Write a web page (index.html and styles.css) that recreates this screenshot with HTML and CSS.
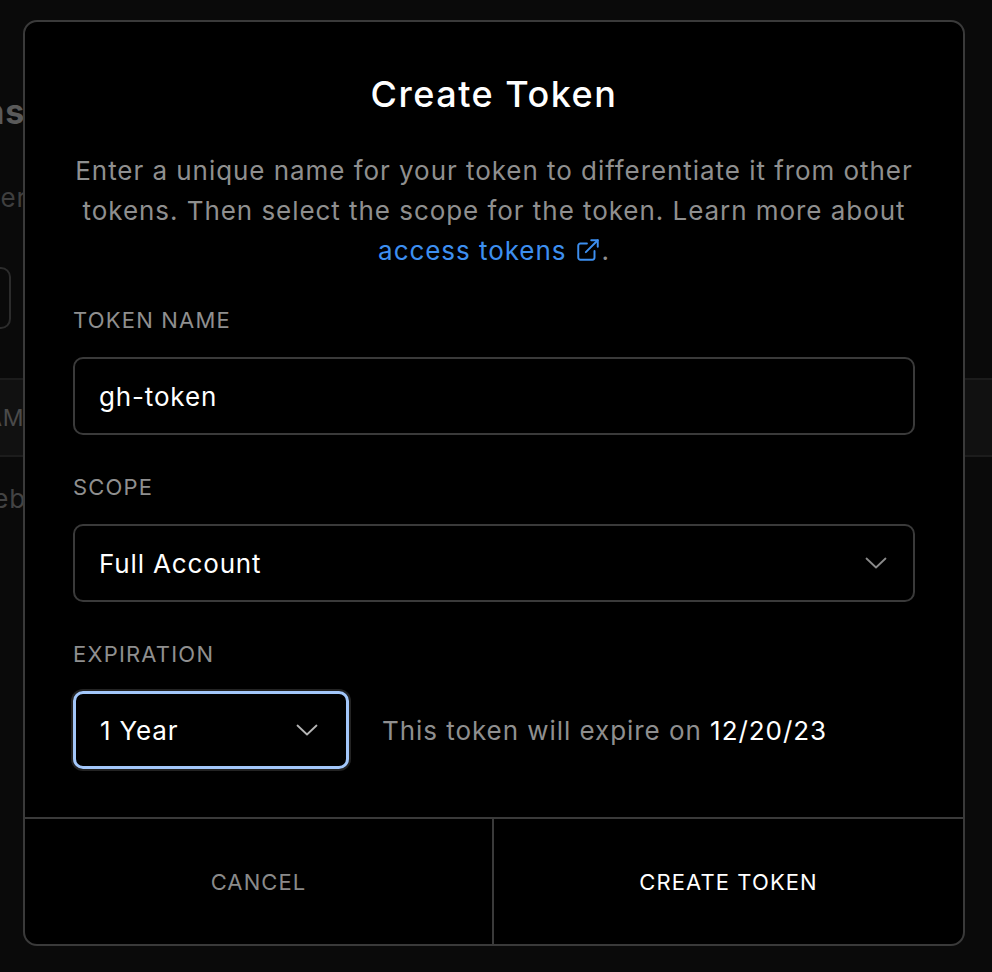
FILE: index.html
```html
<!DOCTYPE html>
<html lang="en">
<head>
<meta charset="utf-8">
<title>Create Token</title>
<link rel="stylesheet" href="styles.css">
</head>
<body>
<div class="page">
  <div class="bg-row bg-heading"><div class="cut">Access Tokens</div></div>
  <div class="bg-row bg-sub"><div class="cut">Create tokens to use with the CLI or API from other</div></div>
  <div class="bg-row bg-input-row"><div class="bg-input"></div></div>
  <div class="bg-band"><div class="cut band-cut">NAME</div></div>
  <div class="bg-row bg-cell"><div class="cut cell-cut">Deb</div></div>
</div>

<div class="modal" role="dialog" aria-labelledby="modal-title">
  <div class="modal-body">
    <h2 class="title" id="modal-title">Create Token</h2>
    <p class="desc">Enter a unique name for your token to differentiate it from other tokens. Then select the scope for the token. Learn more about <a class="link" href="#">access tokens<svg class="ext" viewBox="0 0 24 24" width="26" height="26" fill="none" stroke="currentColor" stroke-width="1.8" stroke-linecap="round" stroke-linejoin="round"><path d="M18 13v6a2 2 0 0 1-2 2H5a2 2 0 0 1-2-2V8a2 2 0 0 1 2-2h6"/><path d="M15 3h6v6"/><path d="M10 14L21 3"/></svg></a>.</p>

    <div class="field field-first">
      <div class="label">TOKEN NAME</div>
      <div class="input">gh-token</div>
    </div>

    <div class="field">
      <div class="label">SCOPE</div>
      <div class="input select">
        <span>Full Account</span>
        <svg class="chev" viewBox="0 0 22 12" width="22" height="12" fill="none" stroke="currentColor" stroke-width="1.8" stroke-linecap="round" stroke-linejoin="round"><polyline points="1.5 1.5 11 10.5 20.5 1.5"/></svg>
      </div>
    </div>

    <div class="field">
      <div class="label">EXPIRATION</div>
      <div class="exp-row">
        <div class="input select small focus">
          <span>1 Year</span>
          <svg class="chev" viewBox="0 0 22 12" width="22" height="12" fill="none" stroke="currentColor" stroke-width="1.8" stroke-linecap="round" stroke-linejoin="round"><polyline points="1.5 1.5 11 10.5 20.5 1.5"/></svg>
        </div>
        <div class="exp-note">This token will expire on <span class="date">12/20/23</span></div>
      </div>
    </div>
  </div>

  <div class="footer">
    <button class="btn btn-cancel" type="button">CANCEL</button>
    <button class="btn btn-create" type="button">CREATE TOKEN</button>
  </div>
</div>
</body>
</html>
```

FILE: styles.css
```css
* { box-sizing: border-box; }

html, body {
  margin: 0;
  padding: 0;
  background: #0a0a0a;
  font-family: Inter, "Noto Sans", "Liberation Sans", sans-serif;
  overflow: hidden;
}

.page {
  width: 992px;
  height: 972px;
  display: flex;
  flex-direction: column;
}

/* background page (dimmed, mostly hidden by the dialog) */
.bg-row {
  display: flex;
}
.cut {
  width: 1200px;
  margin-left: -1175px;
  text-align: right;
  white-space: nowrap;
  letter-spacing: 0.8px;
}
.bg-heading {
  margin-top: 92px;
  font-size: 34px;
  font-weight: 700;
  line-height: 40px;
  color: #5a5a5a;
}
.bg-sub {
  margin-top: 46px;
  font-size: 26px;
  line-height: 40px;
  color: #3f3f3f;
}
.bg-sub .cut { margin-left: -1173px; }
.bg-input-row {
  margin-top: 49px;
}
.bg-input {
  width: 200px;
  height: 62px;
  margin-left: -189px;
  border: 2px solid #2c2c2c;
  border-radius: 10px;
}
.bg-band {
  margin-top: 49px;
  height: 79px;
  background: #111111;
  border-top: 2px solid #1c1c1c;
  border-bottom: 2px solid #1c1c1c;
  display: flex;
  align-items: center;
  font-size: 23px;
  color: #4a4a4a;
}
.band-cut { margin-left: -1161px; }
.bg-cell {
  margin-top: 22px;
  font-size: 26px;
  line-height: 40px;
  color: #434343;
}
.cell-cut { margin-left: -1174px; }

/* modal */
.modal {
  position: absolute;
  left: 23px;
  top: 20px;
  width: 942px;
  height: 926px;
  background: #000;
  border: 2px solid #3a3a3a;
  border-radius: 14px;
  display: flex;
  flex-direction: column;
  overflow: hidden;
}
.modal-body {
  padding: 50px 48px 0;
  flex: 1;
}
.title {
  margin: 0;
  text-align: center;
  font-size: 36px;
  line-height: 44px;
  font-weight: 500;
  letter-spacing: 1.5px;
  color: #ffffff;
}
.desc {
  margin: 35px 0 0;
  text-align: center;
  font-size: 26px;
  line-height: 40px;
  letter-spacing: 0.95px;
  color: #8f8f8f;
}
.link {
  color: #3d8ff0;
  text-decoration: none;
}
.ext {
  display: inline-block;
  vertical-align: -3px;
  margin-left: 9px;
}

.field { margin-top: 37px; }
.field-first { margin-top: 34px; }
.label {
  font-size: 22px;
  line-height: 30px;
  letter-spacing: 1.2px;
  color: #8f8f8f;
}
.input {
  margin-top: 22px;
  height: 78px;
  border: 2px solid #3a3a3a;
  border-radius: 10px;
  padding: 0 24px;
  display: flex;
  align-items: center;
  font-size: 26px;
  letter-spacing: 0.85px;
  color: #ffffff;
}
.select {
  justify-content: space-between;
  padding-right: 26px;
}
.chev { color: #8a8a8a; }

.exp-row {
  display: flex;
  align-items: center;
  gap: 33px;
  margin-top: 22px;
}
.exp-row .input { margin-top: 0; }
.small {
  width: 276px;
  padding-left: 24px;
  padding-right: 28px;
}
.focus {
  border: 3px solid #a3c7fa;
  box-shadow: 0 0 0 2px #232323;
}
.focus .chev { color: #b5b5b5; }
.exp-note {
  font-size: 26px;
  letter-spacing: 0.95px;
  color: #8f8f8f;
}
.date { color: #ffffff; }

.footer {
  height: 127px;
  border-top: 2px solid #3a3a3a;
  display: grid;
  grid-template-columns: 1fr 1fr;
}
.btn {
  background: transparent;
  border: 0;
  font-family: inherit;
  font-size: 22px;
  letter-spacing: 1.1px;
  cursor: pointer;
}
.btn-cancel {
  color: #8a8a8a;
  border-right: 2px solid #3a3a3a;
}
.btn-create { color: #ffffff; }
```
